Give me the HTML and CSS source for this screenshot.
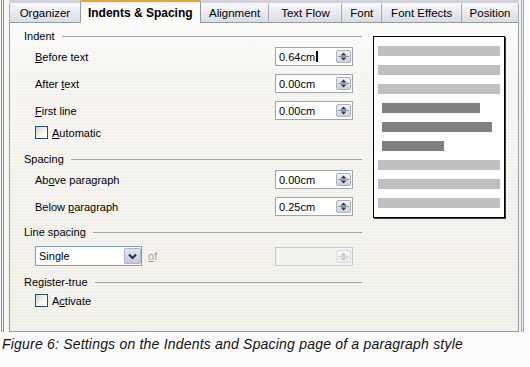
FILE: index.html
```html
<!DOCTYPE html>
<html>
<head>
<meta charset="utf-8">
<link rel="stylesheet" href="styles.css">
</head>
<body>
<div class="window">
  <div class="tabs">
    <div class="tab t-org">Organizer</div>
    <div class="tab active t-ind">Indents &amp; Spacing</div>
    <div class="tab t-ali">Alignment</div>
    <div class="tab t-flow">Text Flow</div>
    <div class="tab t-font">Font</div>
    <div class="tab t-eff">Font Effects</div>
    <div class="tab t-pos">Position</div>
  </div>
  <div class="panel">
    <div class="form">
      <div class="heading"><span>Indent</span></div>
      <div class="field">
        <span><u>B</u>efore text</span>
        <div class="spinbox"><span class="val">0.64cm<i class="caret"></i></span><span class="spin"><svg width="13" height="11" viewBox="0 0 13 11"><path d="M6.5 1.5L9.5 4.5H3.5Z" fill="#3c3c3c"/><path d="M1 5.5H12" stroke="#8d95a6"/><path d="M3.5 6.5H9.5L6.5 9.5Z" fill="#3c3c3c"/></svg></span></div>
      </div>
      <div class="field">
        <span>After <u>t</u>ext</span>
        <div class="spinbox"><span class="val">0.00cm</span><span class="spin"><svg width="13" height="11" viewBox="0 0 13 11"><path d="M6.5 1.5L9.5 4.5H3.5Z" fill="#3c3c3c"/><path d="M1 5.5H12" stroke="#8d95a6"/><path d="M3.5 6.5H9.5L6.5 9.5Z" fill="#3c3c3c"/></svg></span></div>
      </div>
      <div class="field">
        <span><u>F</u>irst line</span>
        <div class="spinbox"><span class="val">0.00cm</span><span class="spin"><svg width="13" height="11" viewBox="0 0 13 11"><path d="M6.5 1.5L9.5 4.5H3.5Z" fill="#3c3c3c"/><path d="M1 5.5H12" stroke="#8d95a6"/><path d="M3.5 6.5H9.5L6.5 9.5Z" fill="#3c3c3c"/></svg></span></div>
      </div>
      <div class="check check-auto"><span class="box"></span><span><u>A</u>utomatic</span></div>

      <div class="heading sec-spacing"><span>Spacing</span></div>
      <div class="field">
        <span>Ab<u>o</u>ve paragraph</span>
        <div class="spinbox"><span class="val">0.00cm</span><span class="spin"><svg width="13" height="11" viewBox="0 0 13 11"><path d="M6.5 1.5L9.5 4.5H3.5Z" fill="#3c3c3c"/><path d="M1 5.5H12" stroke="#8d95a6"/><path d="M3.5 6.5H9.5L6.5 9.5Z" fill="#3c3c3c"/></svg></span></div>
      </div>
      <div class="field">
        <span>Below <u>p</u>aragraph</span>
        <div class="spinbox"><span class="val">0.25cm</span><span class="spin"><svg width="13" height="11" viewBox="0 0 13 11"><path d="M6.5 1.5L9.5 4.5H3.5Z" fill="#3c3c3c"/><path d="M1 5.5H12" stroke="#8d95a6"/><path d="M3.5 6.5H9.5L6.5 9.5Z" fill="#3c3c3c"/></svg></span></div>
      </div>

      <div class="heading sec-line"><span>Line spacing</span></div>
      <div class="field selrow">
        <div class="select"><span>Single</span><span class="drop"><svg width="15" height="14" viewBox="0 0 15 14"><path d="M4 5.5L7.5 9L11 5.5" fill="none" stroke="#1f2f4f" stroke-width="2"/></svg></span></div>
        <span class="of"><u>o</u>f</span>
        <div class="spinbox disabled"><span class="val"></span><span class="spin"><svg width="13" height="11" viewBox="0 0 13 11"><path d="M6.5 1.5L9.5 4.5H3.5Z" fill="#c4c4c4"/><path d="M1 5.5H12" stroke="#d6d6d6"/><path d="M3.5 6.5H9.5L6.5 9.5Z" fill="#c4c4c4"/></svg></span></div>
      </div>

      <div class="heading sec-reg"><span>Register-true</span></div>
      <div class="check check-act"><span class="box"></span><span>A<u>c</u>tivate</span></div>
    </div>
    <div class="preview">
      <div class="bar"></div>
      <div class="bar"></div>
      <div class="bar"></div>
      <div class="bar dark d1"></div>
      <div class="bar dark d2"></div>
      <div class="bar dark d3"></div>
      <div class="bar"></div>
      <div class="bar"></div>
      <div class="bar"></div>
    </div>
  </div>
</div>
<p class="caption">Figure 6: Settings on the Indents and Spacing page of a paragraph style</p>
</body>
</html>
```

FILE: styles.css
```css
* { box-sizing: border-box; }

body {
  margin: 0;
  width: 530px;
  height: 367px;
  overflow: hidden;
  background: #fcfcfc;
  font-family: "Liberation Sans", Arial, sans-serif;
  font-size: 11px;
  color: #000;
}

u { text-decoration: underline; text-underline-offset: 1px; }

.window {
  width: 530px;
  height: 332px;
  padding: 0 11px 0 9px;
  background: linear-gradient(to right,
    #f4f4f4 0 1px, #8c8c8c 1px 2px, #f4f4f4 2px 3px, #8c8c8c 3px 4px,
    #f6f6f4 4px 520px, #f2f3f7 520px 521px, #9aa1b8 521px 522px,
    #eef0f5 522px 523px, #9aa1b8 523px 524px, #fcfcfc 524px);
}

/* tabs */
.tabs {
  display: flex;
  height: 23px;
  background: linear-gradient(#d2d3db 0 3px, transparent 3px);
}

.tab {
  margin-top: 3px;
  height: 20px;
  display: flex;
  align-items: center;
  justify-content: center;
  border-left: 1px solid #a9acba;
  border-bottom: 1px solid #919b9c;
  border-radius: 2px 2px 0 0;
  background: linear-gradient(#fbfbfc, #ebecf1 45%, #d9dce6);
  white-space: nowrap;
  font-size: 11.5px;
}

.tab.active {
  margin-top: 0;
  height: 23px;
  border-top: 2px solid #e9a43c;
  border-left: 1px solid #919b9c;
  border-right: 1px solid #919b9c;
  border-bottom: none;
  background: #fbfbf9;
  font-weight: bold;
  font-size: 12px;
}

.t-org { width: 71px; }
.t-ind { width: 121px; }
.t-ali { width: 68px; border-left: none; }
.t-flow { width: 73px; }
.t-font { width: 40px; }
.t-eff { width: 80px; }
.t-pos { width: 58px; border-right: 1px solid #a9acba; }

/* panel */
.panel {
  display: flex;
  gap: 11px;
  height: 309px;
  padding: 6px 0 0 14px;
  border: 1px solid #919b9c;
  border-top: none;
  background:
    repeating-linear-gradient(to bottom, rgba(255,255,255,0.35) 0 1px, transparent 1px 3px),
    linear-gradient(#fbfbf9 0, #f4f3ef 60px, #efeee7 300px);
}

.form { width: 338px; }

.heading {
  display: flex;
  align-items: center;
  gap: 7px;
  height: 14px;
}
.heading::after {
  content: "";
  flex: 1;
  border-top: 1px solid #a3a5aa;
}
.sec-spacing { margin-top: 13px; }
.sec-line { margin-top: 9px; }
.sec-reg { margin-top: 9px; }

.field {
  display: flex;
  align-items: center;
  justify-content: space-between;
  height: 19px;
  margin-top: 8px;
  padding: 0 9px 0 11px;
}
.heading + .field { margin-top: 4px; }

.spinbox {
  width: 78px;
  height: 19px;
  display: flex;
  align-items: center;
  justify-content: space-between;
  padding: 0 1px 0 3px;
  border: 1px solid #9ea5ad;
  background: #fff;
}
.val { display: flex; align-items: center; }
.caret {
  display: inline-block;
  width: 2px;
  height: 11px;
  margin-left: 1px;
  background: #000;
}
.spin {
  width: 15px;
  height: 13px;
  display: flex;
  border: 1px solid #a7afc0;
  border-radius: 2px;
  background: linear-gradient(#eef0f5, #cdd2de);
}
.spinbox.disabled {
  border-color: #c6c8cb;
  background: #f3f3f0;
  margin-left: auto;
}
.spinbox.disabled .spin {
  border-color: #dcdde0;
  background: linear-gradient(#f7f7f7, #ebebeb);
}

.check {
  display: flex;
  align-items: center;
  gap: 4px;
  height: 13px;
  padding-left: 11px;
}
.check-auto { margin-top: 6px; }
.check-act { margin-top: 5px; }
.box {
  width: 13px;
  height: 13px;
  border: 1px solid #2b4d70;
  background: linear-gradient(135deg, #d6d6d0, #f6f6f4 60%, #fff);
}

.field.selrow {
  justify-content: flex-start;
  gap: 6px;
  height: 20px;
}
.heading + .selrow { margin-top: 7px; }

.select {
  width: 107px;
  height: 20px;
  display: flex;
  align-items: center;
  justify-content: space-between;
  padding: 0 0 0 3px;
  border: 1px solid #7f9db9;
  background: #fff;
}
.drop {
  width: 17px;
  height: 16px;
  display: flex;
  align-items: center;
  justify-content: center;
  border: 1px solid #a8b4cc;
  border-radius: 2px;
  background: linear-gradient(#e2e6ef, #c3cadb);
}
.of { color: #a4a4a4; }

/* preview */
.preview {
  margin-top: 7px;
  width: 132px;
  height: 182px;
  display: flex;
  flex-direction: column;
  gap: 9px;
  padding: 9px 4px;
  border: 1px solid #000;
  box-shadow: 1px 1px 0 #3a3a3a;
  background: #fdfdfd;
}
.bar { height: 10px; flex: none; background: #c0c0c0; }
.bar.dark { background: #808080; margin-left: 4px; }
.d1 { width: 98px; }
.d2 { width: 110px; }
.d3 { width: 62px; }

.caption {
  margin: 4px 0 0;
  padding-left: 2px;
  font-size: 14px;
  line-height: 16px;
  font-style: italic;
  letter-spacing: 0.2px;
  color: #111;
}
```
